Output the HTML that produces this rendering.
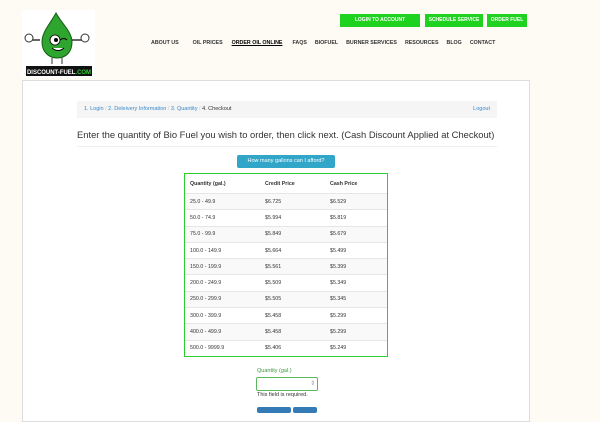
<!DOCTYPE html>
<html><head><style>
body{margin:0;width:600px;height:411px;overflow:hidden;background:#fdfbf4;font-family:"Liberation Sans",sans-serif;position:relative}
.a{position:absolute}
.gb{position:absolute;top:14px;height:13px;background:#1fd21f;color:#fff;font-size:5px;font-weight:bold;line-height:13px;text-align:center}
.nav{position:absolute;top:40px;font-size:5.3px;color:#333;font-weight:bold;white-space:nowrap}
.nav span{margin-right:8px}
.panel{position:absolute;left:22px;top:80px;width:506px;height:340px;background:#fff;border:1px solid #ddd}
table{border-collapse:collapse;font-size:5.3px;color:#333}
td,th{text-align:left;padding:0 0 0 5px;height:15.3px;border-top:1px solid #e6e6e6}
th{height:19px;border-top:none;font-weight:bold}
tr:nth-child(even) td{background:#f9f9f9}
</style></head><body>
<div class="a" style="left:22px;top:10px;width:73px;height:68px;background:#fff"></div>
<svg class="a" style="left:22px;top:10px" width="73" height="68" viewBox="0 0 73 68">
<path d="M34 3 C28 14 20 22 20 32 C20 42 27 48 35 48 C44 48 50 42 50 32 C50 22 40 14 34 3Z" fill="#2ea52e" stroke="#135c13" stroke-width="1"/>
<circle cx="33" cy="30" r="5" fill="#fff" stroke="#000" stroke-width=".8"/><circle cx="34" cy="30" r="2" fill="#000"/>
<path d="M38 30 q4-3 7 0" stroke="#000" fill="none"/>
<path d="M30 38 q6 5 12 0" stroke="#000" fill="#fff"/>
<path d="M8 30 h10 M50 30 h10" stroke="#333" stroke-width="1.5"/>
<circle cx="7" cy="28" r="4" fill="#fff" stroke="#333"/><circle cx="63" cy="28" r="4" fill="#fff" stroke="#333"/>
<path d="M30 48 v6 M40 48 v6" stroke="#333"/>
<rect x="4" y="56" width="66" height="10" fill="#111"/>
<text x="5" y="64" font-size="6" font-weight="bold" fill="#fff" font-family="Liberation Sans" textLength="64" lengthAdjust="spacingAndGlyphs">DISCOUNT-FUEL<tspan fill="#3c3">.COM</tspan></text>
</svg>
<div class="gb" style="left:340px;width:80px">LOGIN TO ACCOUNT</div>
<div class="gb" style="left:425px;width:58px">SCHEDULE SERVICE</div>
<div class="gb" style="left:487px;width:40px">ORDER FUEL</div>
<div class="nav" style="left:151px"><span style="margin-right:14px">ABOUT US</span><span style="margin-right:9px">OIL PRICES</span><span style="text-decoration:underline;color:#000;margin-right:10px">ORDER OIL ONLINE</span><span>FAQS</span><span>BIOFUEL</span><span>BURNER SERVICES</span><span>RESOURCES</span><span>BLOG</span><span>CONTACT</span></div>
<div class="panel"></div>
<div class="a" style="left:77px;top:101px;width:420px;height:17px;background:#f5f5f5;font-size:5.5px;line-height:17px;color:#3a87c8"><span style="margin-left:7px">1. Login</span><span style="color:#ccc"> / </span>2. Deleivery Information<span style="color:#ccc"> / </span>3. Quantity<span style="color:#ccc"> / </span><span style="color:#333">4. Checkout</span><span style="position:absolute;right:7px">Logout</span></div>
<div class="a" style="left:77px;top:129px;width:420px;font-size:9.4px;color:#333;white-space:nowrap;border-bottom:1px solid #eee;padding-bottom:6px">Enter the quantity of Bio Fuel you wish to order, then click next. (Cash Discount Applied at Checkout)</div>
<div class="a" style="left:237px;top:155px;width:98px;height:13px;background:#31a6c9;border-radius:2px;color:#fff;font-size:5.5px;line-height:13px;text-align:center">How many gallons can I afford?</div>
<div class="a" style="left:184px;top:173px;width:202px;border:1.5px solid #2ecc2e">
<table style="width:100%">
<tr><th style="width:70px">Quantity (gal.)</th><th style="width:60px">Credit Price</th><th>Cash Price</th></tr>
<tr><td>25.0 - 49.9</td><td>$6.725</td><td>$6.529</td></tr>
<tr><td>50.0 - 74.9</td><td>$5.994</td><td>$5.819</td></tr>
<tr><td>75.0 - 99.9</td><td>$5.849</td><td>$5.679</td></tr>
<tr><td>100.0 - 149.9</td><td>$5.664</td><td>$5.499</td></tr>
<tr><td>150.0 - 199.9</td><td>$5.561</td><td>$5.399</td></tr>
<tr><td>200.0 - 249.9</td><td>$5.509</td><td>$5.349</td></tr>
<tr><td>250.0 - 299.9</td><td>$5.505</td><td>$5.345</td></tr>
<tr><td>300.0 - 399.9</td><td>$5.458</td><td>$5.299</td></tr>
<tr><td>400.0 - 499.9</td><td>$5.458</td><td>$5.299</td></tr>
<tr><td>500.0 - 9999.9</td><td>$5.406</td><td>$5.249</td></tr>
</table></div>
<div class="a" style="left:257px;top:368px;font-size:5.5px;color:#3c9a3c">Quantity (gal.)</div>
<div class="a" style="left:256px;top:377px;width:60px;height:12px;border:1px solid #5cb85c;border-radius:2px;background:#fff;font-size:6px;color:#999;line-height:12px;text-align:right">⇕&nbsp;</div>
<div class="a" style="left:257px;top:392px;font-size:5.5px;color:#333">This field is required.</div>
<div class="a" style="left:257px;top:407px;width:34px;height:6px;background:#337ab7;border-radius:2px"></div>
<div class="a" style="left:293px;top:407px;width:24px;height:6px;background:#337ab7;border-radius:2px"></div>
</body></html>
